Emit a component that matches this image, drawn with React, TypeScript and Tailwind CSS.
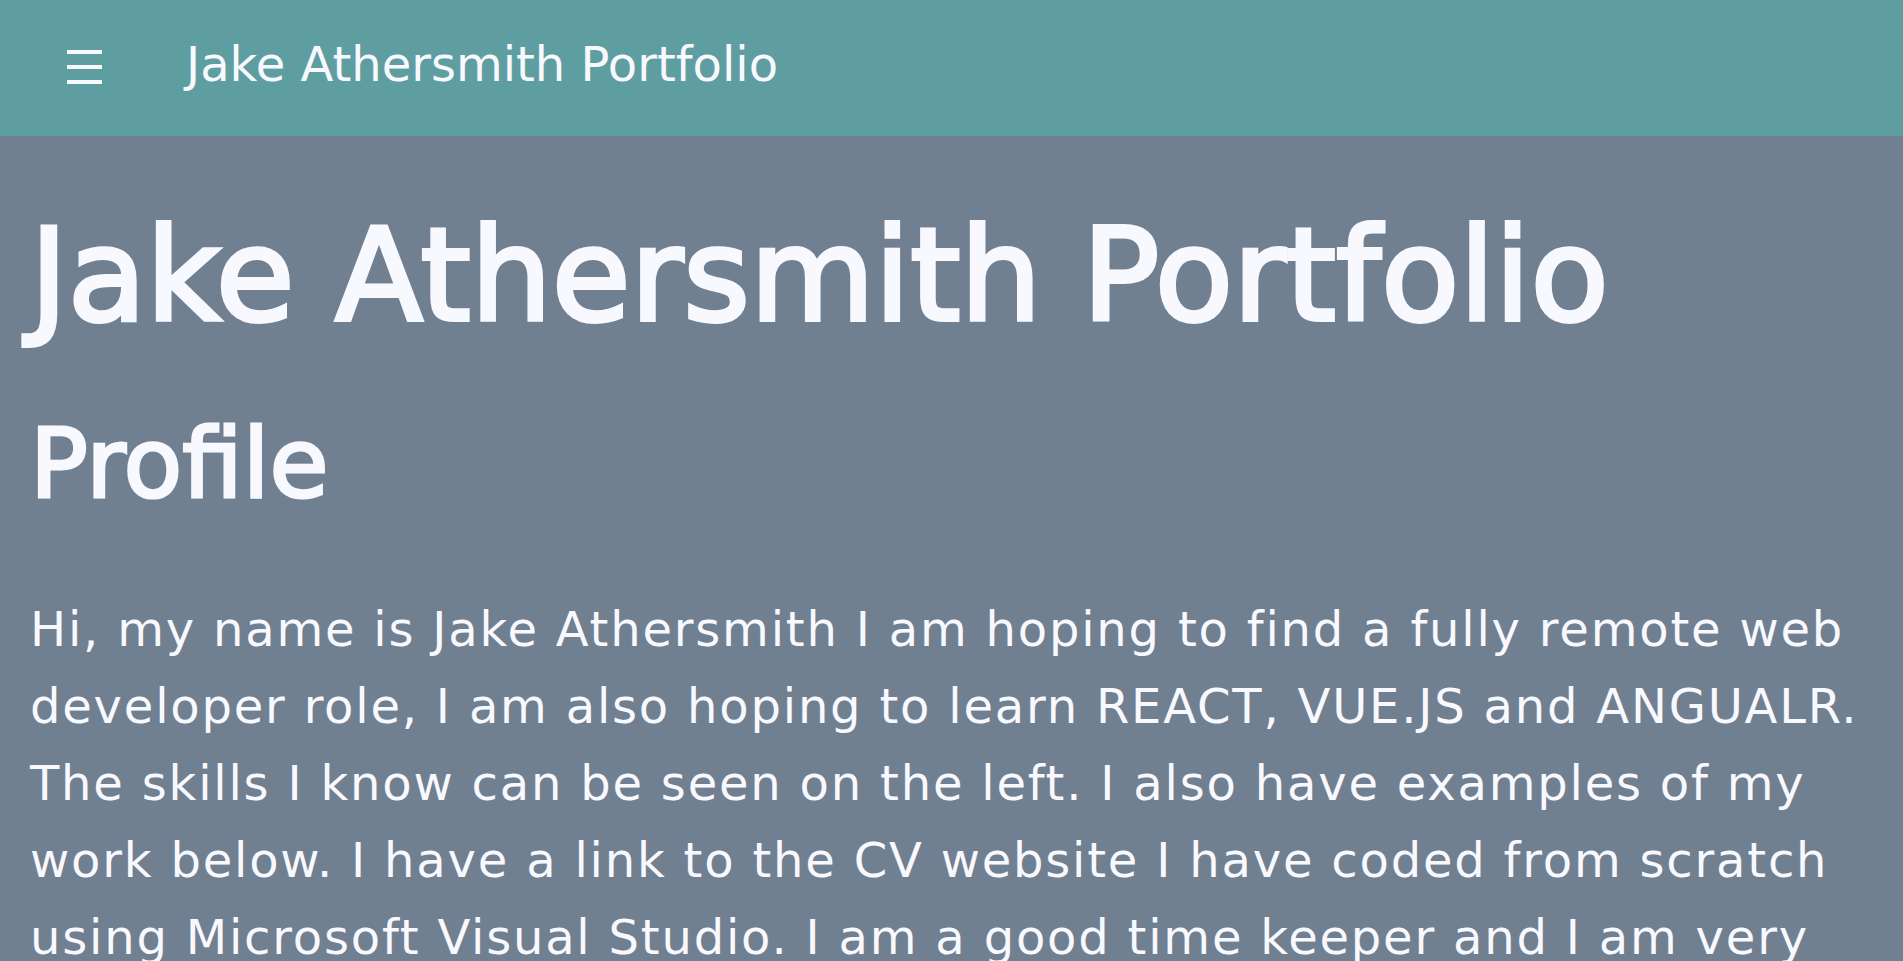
export default function App() {
  return (
    <div className="min-h-screen bg-[#708090] text-[#f8f8ff] font-['DejaVu_Sans',sans-serif]">
      {/* top bar */}
      <header className="flex h-[136px] items-center bg-[#5f9ea0] pl-[67px]">
        <button className="mb-[2px] shrink-0" aria-label="menu">
          <svg width="35" height="34" viewBox="0 0 35 34" fill="#f8f8ff">
            <rect x="0" y="0" width="35" height="4" />
            <rect x="0" y="15" width="35" height="4" />
            <rect x="0" y="30" width="35" height="4" />
          </svg>
        </button>
        <span className="mb-[9px] ml-[84px] text-[48px] leading-none">Jake Athersmith Portfolio</span>
      </header>

      <main className="px-[30px] pt-[63px] pb-10">
        <h1 className="text-[128px] leading-[154px] font-normal [-webkit-text-stroke:4px_#f8f8ff]">
          Jake Athersmith Portfolio
        </h1>
        <h2 className="mt-[54px] text-[96px] leading-[115px] font-normal [-webkit-text-stroke:3px_#f8f8ff]">
          Profile
        </h2>
        <p className="mt-[69px] text-[48px] leading-[77px] tracking-[1.8px]">
          Hi, my name is Jake Athersmith I am hoping to find a fully remote web developer role, I am
          also hoping to learn REACT, VUE.JS and ANGUALR. The skills I know can be seen on the left. I
          also have examples of my work below. I have a link to the CV website I have coded from
          scratch using Microsoft Visual Studio. I am a good time keeper and I am very reliable.
        </p>
      </main>
    </div>
  );
}
